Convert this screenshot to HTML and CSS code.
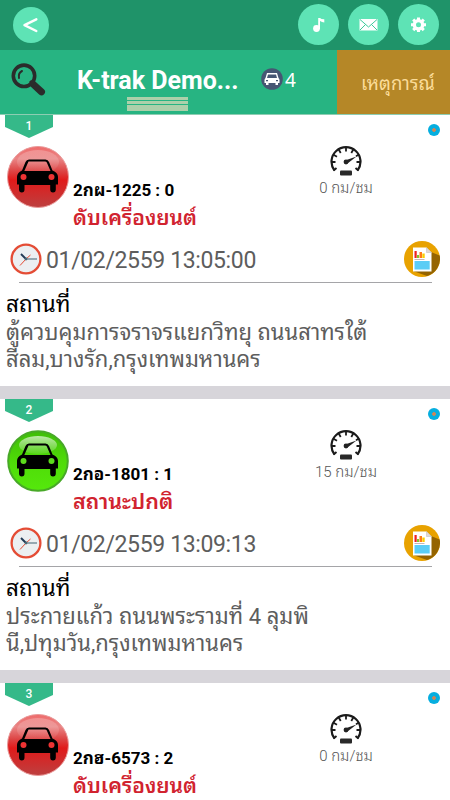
FILE: index.html
```html
<!DOCTYPE html>
<html lang="th">
<head>
<meta charset="utf-8">
<title>K-trak</title>
<link rel="stylesheet" href="styles.css">
</head>
<body>
<svg class="defs" width="0" height="0" aria-hidden="true">
  <defs>
    <linearGradient id="redFill" x1="0" y1="0" x2="0" y2="1">
      <stop offset="0" stop-color="#ee6a6a"/><stop offset=".2" stop-color="#ea8585"/><stop offset=".42" stop-color="#dc3f3f"/><stop offset=".55" stop-color="#e01a1a"/><stop offset="1" stop-color="#bd4040"/>
    </linearGradient>
    <linearGradient id="greenFill" x1="0" y1="0" x2="0" y2="1">
      <stop offset="0" stop-color="#3fbd08"/><stop offset=".5" stop-color="#4fdb08"/><stop offset="1" stop-color="#55e80c"/>
    </linearGradient>
    <linearGradient id="gloss" x1="0" y1="0" x2="0" y2="1">
      <stop offset="0" stop-color="#fff" stop-opacity=".65"/><stop offset="1" stop-color="#fff" stop-opacity=".08"/>
    </linearGradient>
    <symbol id="car" viewBox="0 0 62 62">
      <path fill="#000" fill-rule="evenodd" d="M18.500 16Q19.500 13.500 22 13.500H38.500Q41 13.500 42 16L45.500 24.500Q51 26.500 51 31V38.500H48.800V43.500Q48.800 46.500 46 46.500T43.200 43.500V39H17.500V43.500Q17.500 46.500 14.800 46.500T12 43.500V38.500H10V31Q10 26.500 15 24.500ZM21.500 15.500L17.300 25H43.500L39.800 16.500Q39.400 15.500 38 15.500Z"/>
    </symbol>
    <symbol id="redCar" viewBox="0 0 62 62">
      <circle cx="31" cy="31" r="30.500" fill="url(#redFill)" stroke="#e99a9a"/>
      <ellipse cx="31" cy="16" rx="21" ry="12" fill="url(#gloss)" opacity=".35"/>
      <use href="#car"/>
      <circle cx="16.500" cy="31" r="3" fill="#e33"/><circle cx="44.500" cy="31" r="3" fill="#e33"/>
    </symbol>
    <symbol id="greenCar" viewBox="0 0 62 62">
      <circle cx="31" cy="31" r="29.800" fill="url(#greenFill)" stroke="#48a928" stroke-width="2"/>
      <ellipse cx="31" cy="15" rx="19" ry="9" fill="url(#gloss)"/>
      <use href="#car"/>
      <circle cx="16.500" cy="31" r="3" fill="#5cdb1c"/><circle cx="44.500" cy="31" r="3" fill="#5cdb1c"/>
    </symbol>
    <symbol id="gauge" viewBox="0 0 32 30">
      <path d="M4.500 24.500A14.500 14.500 0 1 1 27.500 24.500" fill="none" stroke="#1b1b1b" stroke-width="2.200"/>
      <path d="M16 1.500V5.500M1.500 16H5.500M26.500 16H30.500M8.700 3.500L10.700 7M23.300 3.500L21.300 7M3.500 8.700L7 10.700M28.500 8.700L26 10.200M3.700 24.500L6.500 22M28.300 24.500L25.500 22" stroke="#1b1b1b" stroke-width="1.800"/>
      <path d="M15 14.500L26.500 10.500L17.500 17.500Z" fill="#222"/><circle cx="16" cy="16" r="2.400" fill="#222"/>
      <rect x="10" y="24.500" width="12" height="5" rx="1" fill="#292929"/>
    </symbol>
    <symbol id="clock" viewBox="0 0 32 32">
      <circle cx="16" cy="16" r="14.400" fill="#eceff1" stroke="#e44c35" stroke-width="2.300"/>
      <path d="M16 16L20.500 12M16 16L10 22.500" stroke="#e44c35" stroke-width="1"/>
      <path d="M16 16H27" stroke="#5c7887" stroke-width="1.200"/><path d="M16 16L11 11" stroke="#223a55" stroke-width="1.900"/>
      <circle cx="16" cy="16" r="1.400" fill="#4a6572"/>
    </symbol>
    <symbol id="report" viewBox="0 0 36 36">
      <circle cx="18" cy="18" r="18" fill="#e8a200"/>
      <path d="M27 11L35.700 14.500A18 18 0 0 1 23 35L9 30Z" fill="#956400"/>
      <path d="M9 6.500H22.500L27.500 11.500V30.500H9Z" fill="#fff"/>
      <path d="M22.500 6.500V11.500H27.500Z" fill="#e3d8d3" stroke="#bbb" stroke-width=".5"/>
      <path d="M10.500 10H12.700V17H10.500Z" fill="#ef2020"/><path d="M13 14H15V17H13Z" fill="#83c52e"/><path d="M15.500 11H18V17H15.500Z" fill="#ff7b18"/><path d="M18.300 12.500H20.700V17H18.300Z" fill="#f9cf00"/>
      <path d="M10.500 18.500H20.500" stroke="#c6b6b6"/><path d="M10.500 20H25.700V28.500H10.500Z" fill="#5bcdf5"/>
    </symbol>
  </defs>
</svg>

<header class="topbar">
  <button class="round back" aria-label="Back"><svg width="36" height="36" viewBox="0 0 36 36"><path d="M23.300 12.300L11.500 18.200L23.300 24" fill="none" stroke="#fff" stroke-width="2.500" stroke-linecap="round" stroke-linejoin="round"/></svg></button>
  <nav class="actions">
    <button class="round" aria-label="Sound"><svg width="41" height="41" viewBox="0 0 41 41"><circle cx="18.500" cy="24.500" r="3.400" fill="#fff"/><path d="M20.200 14H22Q23 15.200 26.300 15.200V18.500Q24 18.200 22 17V25H20.200Z" fill="#fff"/></svg></button>
    <button class="round" aria-label="Messages"><svg width="41" height="41" viewBox="0 0 41 41"><path d="M11.500 15H29.500V26.500H11.500Z" fill="#fff"/><path d="M12 15.500L20.500 23L29 15.500M12 26L17.500 20.500M29 26L23.500 20.500" fill="none" stroke="#3ecb9b" stroke-width="1"/></svg></button>
    <button class="round" aria-label="Settings"><svg width="41" height="41" viewBox="0 0 41 41"><circle cx="20.500" cy="20.800" r="4.200" fill="none" stroke="#fff" stroke-width="3.400"/><path d="M20.500 13.500V16.500M20.500 25.100V28.100M13 20.800H16M25 20.800H28M15.200 15.500L17.300 17.600M23.700 24L25.800 26.100M15.200 26.100L17.300 24M23.700 17.600L25.800 15.500" stroke="#fff" stroke-width="3"/></svg></button>
  </nav>
</header>

<section class="fleetbar">
  <div class="fleet">
    <svg class="search" width="35" height="35" viewBox="0 0 35 35"><path d="M22.500 21.500L30.500 28.800" stroke="#2b2b2b" stroke-width="7" stroke-linecap="round"/><path d="M19 18L24 23" stroke="#2b2b2b" stroke-width="3"/><circle cx="13" cy="12.800" r="10.700" fill="none" stroke="#2b2b2b" stroke-width="3.600"/><path d="M8 15Q7 10 11 8" fill="none" stroke="#2b2b2b" stroke-width="2" stroke-linecap="round"/></svg>
    <div class="name"><h1>K-trak Demo...</h1><div class="handle"><i></i><i></i><i></i></div></div>
    <svg class="carbadge" width="22" height="22" viewBox="0 0 22 22"><circle cx="11" cy="11" r="10.800" fill="#465673"/><path fill="#fff" fill-rule="evenodd" d="M6 5H16L17.500 10Q18.500 11 18.500 12V15H17V17H14.500V15H7.500V17H5V15H3.500V12Q3.500 11 4.500 10ZM7 6.500L6 10H16L15 6.500ZM5 12V13.200H7V12ZM15 12V13.200H17V12Z"/></svg>
    <span class="count">4</span>
  </div>
  <div class="events"><span>เหตุการณ์</span></div>
</section>

<main>
  <article class="card">
    <div class="ribbon">1</div><i class="dot"></i>
    <div class="summary">
      <svg class="vehicle"><use href="#redCar"/></svg>
      <div class="info"><div class="plate">2กผ-1225 : 0</div><div class="status off">ดับเครื่องยนต์</div></div>
      <div class="speed"><svg width="32" height="30"><use href="#gauge"/></svg><span>0 กม/ชม</span></div>
    </div>
    <div class="when"><svg width="32" height="32"><use href="#clock"/></svg><time>01/02/2559 13:05:00</time><svg class="report" width="36" height="36"><use href="#report"/></svg></div>
    <div class="place"><h2>สถานที่</h2><p><span>ตู้ควบคุมการจราจรแยกวิทยุ ถนนสาทรใต้</span><span>สีลม,บางรัก,กรุงเทพมหานคร</span></p></div>
  </article>
  <article class="card">
    <div class="ribbon">2</div><i class="dot"></i>
    <div class="summary">
      <svg class="vehicle"><use href="#greenCar"/></svg>
      <div class="info"><div class="plate">2กอ-1801 : 1</div><div class="status">สถานะปกติ</div></div>
      <div class="speed"><svg width="32" height="30"><use href="#gauge"/></svg><span>15 กม/ชม</span></div>
    </div>
    <div class="when"><svg width="32" height="32"><use href="#clock"/></svg><time>01/02/2559 13:09:13</time><svg class="report" width="36" height="36"><use href="#report"/></svg></div>
    <div class="place"><h2>สถานที่</h2><p><span class="wide">ประกายแก้ว ถนนพระรามที่ 4 ลุมพิ</span><span>นี,ปทุมวัน,กรุงเทพมหานคร</span></p></div>
  </article>
  <article class="card last">
    <div class="ribbon">3</div><i class="dot"></i>
    <div class="summary">
      <svg class="vehicle"><use href="#redCar"/></svg>
      <div class="info"><div class="plate">2กฮ-6573 : 2</div><div class="status off">ดับเครื่องยนต์</div></div>
      <div class="speed"><svg width="32" height="30"><use href="#gauge"/></svg><span>0 กม/ชม</span></div>
    </div>
  </article>
</main>
</body>
</html>
```
FILE: styles.css
```css
* { box-sizing: border-box; }
html, body { height: 800px; overflow: hidden; }
body { margin: 0; background: #d7d5da; font-family: Roboto, "Noto Sans Thai Looped", "Noto Sans", sans-serif; }
svg { display: block; flex: none; }
.defs { position: absolute; }
h1, h2, p { margin: 0; font-weight: 400; }

.topbar { height: 50px; background: #1f9369; display: flex; justify-content: space-between; padding: 4px 11px 0 13px; }
.round { width: 41px; height: 41px; padding: 0; border: 0; border-radius: 50%; background: #5ee3b5; }
.back { width: 36px; height: 36px; margin-top: 3px; }
.actions { display: flex; gap: 9px; }

.fleetbar { height: 65px; display: flex; border-bottom: 1px solid #8dcdb2; }
.fleet { width: 337px; background: #27b482; display: flex; padding-left: 11px; }
.search { margin-top: 13px; }
.name { width: 161px; margin-left: 31px; }
h1 { height: 47px; padding-top: 16px; font-size: 25px; line-height: 30px; font-weight: 700; color: #fff; white-space: nowrap; }
.handle { display: grid; gap: 1px; width: 61px; margin-left: 50px; grid-template-rows: 3px 3px 6px; }
.handle i { background: #acd0aa; }
.carbadge { margin: 18px 0 0 23px; }
.count { margin: 18px 0 0 2px; font: 19px/24px "Noto Sans", sans-serif; color: #fff; }
.events { flex: 1; background: #b58727; color: #fbdc99; padding: 22px 0 0 24px; font-size: 18.5px; line-height: 24px; white-space: nowrap; }

.card { position: relative; height: 271px; margin-bottom: 13px; background: #fff; }
.last { height: 117px; margin-bottom: 0; overflow: hidden; }
.ribbon { position: absolute; left: 5px; top: 0; width: 48px; height: 23px; background: #35b989; clip-path: polygon(0 0, 100% 0, 100% 12px, 50% 100%, 0 12px); color: #fff; font-size: 12px; line-height: 23px; font-weight: 500; text-align: center; }
.dot { position: absolute; left: 428px; top: 9px; width: 12px; height: 12px; border-radius: 50%; background: radial-gradient(circle, #cf8558 0 1.500px, #06aedf 2.200px); }
.summary { height: 126px; display: flex; padding: 31px 0 0 7px; }
.vehicle { width: 62px; height: 62px; }
.info { width: 240px; padding: 34px 0 0 4px; white-space: nowrap; }
.plate { height: 23px; line-height: 20px; font-size: 17px; font-weight: 700; color: #000; }
.status { height: 30px; line-height: 30px; font-size: 21.5px; font-weight: 600; color: #d1232f; }
.off { font-size: 21px; }
.speed { width: 74px; display: flex; flex-direction: column; align-items: center; color: #555; font-size: 15px; font-weight: 300; line-height: 20px; white-space: nowrap; }
.speed span { margin-top: 2px; }
.when { height: 36px; display: flex; padding: 2px 10px 0 10px; color: #5d5d5d; }
.when time { margin-left: 4px; font-size: 23px; letter-spacing: -.36px; line-height: 35px; white-space: nowrap; }
.report { margin: -2px 0 0 auto; }
.place { margin-left: 6px; }
.place::before { content: ""; display: block; width: 413px; height: 1px; margin: 5px 0 0 13px; background: #a5a5a8; }
h2 { height: 36px; padding-top: 6px; line-height: 30px; font-size: 22.5px; color: #000; white-space: nowrap; }
p { color: #5d5d5d; font-size: 22px; line-height: 27px; white-space: nowrap; }
p span { display: block; }
.wide { letter-spacing: .05px; }
```
